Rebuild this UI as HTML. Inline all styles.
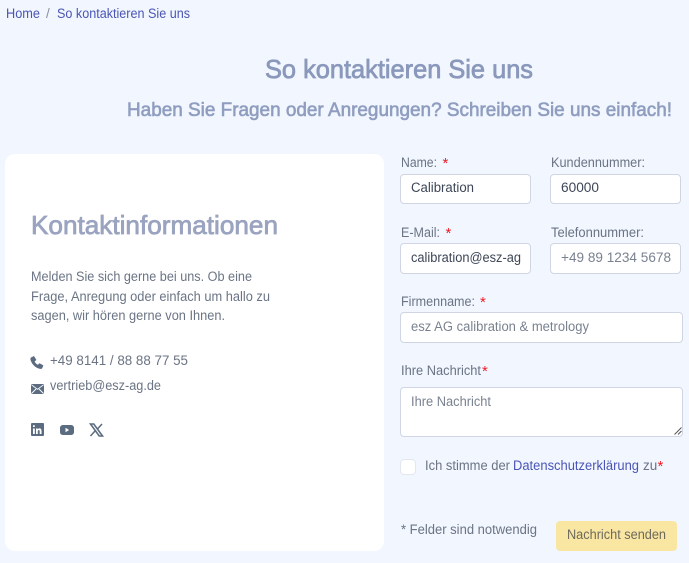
<!DOCTYPE html>
<html lang="de"><head><meta charset="utf-8"><title>So kontaktieren Sie uns</title>
<style>
html,body{margin:0;padding:0;background:#f1f6ff;width:689px;height:563px;overflow:hidden}
.b{position:absolute;box-sizing:border-box;background:#fff;border:1px solid #cfd5e3;border-radius:4px}
svg{position:absolute;left:0;top:0}
text{font-family:"Liberation Sans",sans-serif;font-size:13.5px;fill:#6b7484}
.h{font-weight:400;stroke-width:.75px}
.i{fill:#3d4656}.p{fill:#7a8290}.a{fill:#ee1c25;font-size:15px}.l{fill:#4a55b5}
</style></head><body>
<div style="position:absolute;left:5px;top:154px;width:379px;height:397px;background:#fff;border-radius:10px"></div>
<div class="b" style="left:400px;top:174px;width:131px;height:30px"></div>
<div class="b" style="left:550px;top:174px;width:131px;height:30px"></div>
<div class="b" style="left:400px;top:243px;width:131px;height:31px"></div>
<div class="b" style="left:550px;top:243px;width:131px;height:31px"></div>
<div class="b" style="left:400px;top:312px;width:283px;height:31px"></div>
<div class="b" style="left:400px;top:387px;width:283px;height:50px"></div>
<div class="b" style="left:400px;top:459px;width:16px;height:16px;border-color:#e3e7f0"></div>
<div style="position:absolute;left:556px;top:521px;width:121px;height:30px;background:#f9e6a2;border-radius:4px"></div>
<svg width="689" height="563" viewBox="0 0 689 563">
<text x="6" y="18" class="l" textLength="34" lengthAdjust="spacingAndGlyphs">Home</text>
<text x="46" y="18" style="fill:#8a8f9c">/</text>
<text x="57" y="18" class="l" textLength="133" lengthAdjust="spacingAndGlyphs">So kontaktieren Sie uns</text>
<text x="265" y="78" class="h" style="font-size:26px;fill:#8a98bb;stroke:#8a98bb" textLength="268" lengthAdjust="spacingAndGlyphs">So kontaktieren Sie uns</text>
<text x="127" y="116" class="h" style="font-size:19.500px;fill:#8f9dbf;stroke:#8f9dbf;stroke-width:.6px" textLength="545" lengthAdjust="spacingAndGlyphs">Haben Sie Fragen oder Anregungen? Schreiben Sie uns einfach!</text>
<text x="31" y="234" class="h" style="font-size:26px;fill:#9aa3bf;stroke:#9aa3bf" textLength="247" lengthAdjust="spacingAndGlyphs">Kontaktinformationen</text>
<text x="31" y="281" textLength="221" lengthAdjust="spacingAndGlyphs">Melden Sie sich gerne bei uns. Ob eine</text>
<text x="31" y="301" textLength="239" lengthAdjust="spacingAndGlyphs">Frage, Anregung oder einfach um hallo zu</text>
<text x="31" y="320" textLength="194" lengthAdjust="spacingAndGlyphs">sagen, wir hören gerne von Ihnen.</text>
<text x="50" y="365" textLength="138" lengthAdjust="spacingAndGlyphs">+49 8141 / 88 88 77 55</text>
<text x="50" y="390" textLength="111" lengthAdjust="spacingAndGlyphs">vertrieb@esz-ag.de</text>
<path d="M31 357.500l3-1.500 2.400 4-1.800 1.500c.7 1.500 1.700 2.500 3.300 3.200l1.600-1.500 3.900 2.200-1.200 2.800c-.5.700-1.500.9-2.600.6-4.600-1.300-7.600-4.500-9-8.700-.3-1.100-.3-2 .4-2.600z" fill="#5c6c80"/>
<rect x="31" y="384" width="13" height="10" rx="1" fill="#5c6c80"/>
<path d="M31.500 384.800l6 4.500 6-4.500M31.500 393.500l4.500-4.500M43.500 393.500l-4.500-4.500" fill="none" stroke="#fff" stroke-width=".9"/>
<rect x="31" y="423" width="13" height="13" rx="1" fill="#5c6c80"/>
<path d="M33 428.500h1.800v5.500H33zM33 425.200h1.800V427H33zM36 428.500h1.700v.8c.9-1.300 3.800-1.400 3.800 1.500v3.200h-1.800v-2.900c0-1.500-1.900-1.400-1.900 0v2.900H36z" fill="#fff"/>
<rect x="60" y="425" width="14" height="10" rx="2.800" fill="#5c6c80"/>
<path d="M65.500 427.800l3.600 2.200-3.600 2.200z" fill="#fff"/>
<path d="M90.500 424h3.300l8.700 12h-3.300z" fill="none" stroke="#5c6c80" stroke-width="1.600"/>
<path d="M102 424l-5 5.500M95 431l-4.500 5" fill="none" stroke="#5c6c80" stroke-width="1.500"/>
<text x="401" y="167" textLength="36" lengthAdjust="spacingAndGlyphs">Name:</text><text x="442.500" y="168" class="a">*</text>
<text x="551" y="167" textLength="94" lengthAdjust="spacingAndGlyphs">Kundennummer:</text>
<text x="401" y="237" textLength="39" lengthAdjust="spacingAndGlyphs">E-Mail:</text><text x="445.500" y="238" class="a">*</text>
<text x="551" y="237" textLength="93" lengthAdjust="spacingAndGlyphs">Telefonnummer:</text>
<text x="401" y="306" textLength="74" lengthAdjust="spacingAndGlyphs">Firmenname:</text><text x="480" y="307" class="a">*</text>
<text x="401" y="375" textLength="80" lengthAdjust="spacingAndGlyphs">Ihre Nachricht</text><text x="482" y="376" class="a">*</text>
<text x="411" y="192" class="i" textLength="63" lengthAdjust="spacingAndGlyphs">Calibration</text>
<text x="561" y="192" class="i" textLength="38" lengthAdjust="spacingAndGlyphs">60000</text>
<text x="411" y="262" class="i" textLength="110" lengthAdjust="spacingAndGlyphs">calibration@esz-ag</text>
<text x="561" y="262" class="p" textLength="110" lengthAdjust="spacingAndGlyphs">+49 89 1234 5678</text>
<text x="411" y="331" class="p" textLength="178" lengthAdjust="spacingAndGlyphs">esz AG calibration &amp; metrology</text>
<text x="411" y="406" class="p" textLength="80" lengthAdjust="spacingAndGlyphs">Ihre Nachricht</text>
<path d="M674.500 434.500l7-7M678 434.500l3.500-3.500" stroke="#555" stroke-width="1" fill="none"/>
<text x="425" y="470" textLength="85" lengthAdjust="spacingAndGlyphs">Ich stimme der</text>
<text x="513" y="470" class="l" textLength="126" lengthAdjust="spacingAndGlyphs">Datenschutzerklärung</text>
<text x="643" y="470">zu</text>
<text x="657.500" y="471" class="a">*</text>
<text x="401" y="534" textLength="136" lengthAdjust="spacingAndGlyphs">* Felder sind notwendig</text>
<text x="567" y="539" textLength="99" lengthAdjust="spacingAndGlyphs" style="fill:#6d6a5c">Nachricht senden</text>
</svg>
</body></html>
